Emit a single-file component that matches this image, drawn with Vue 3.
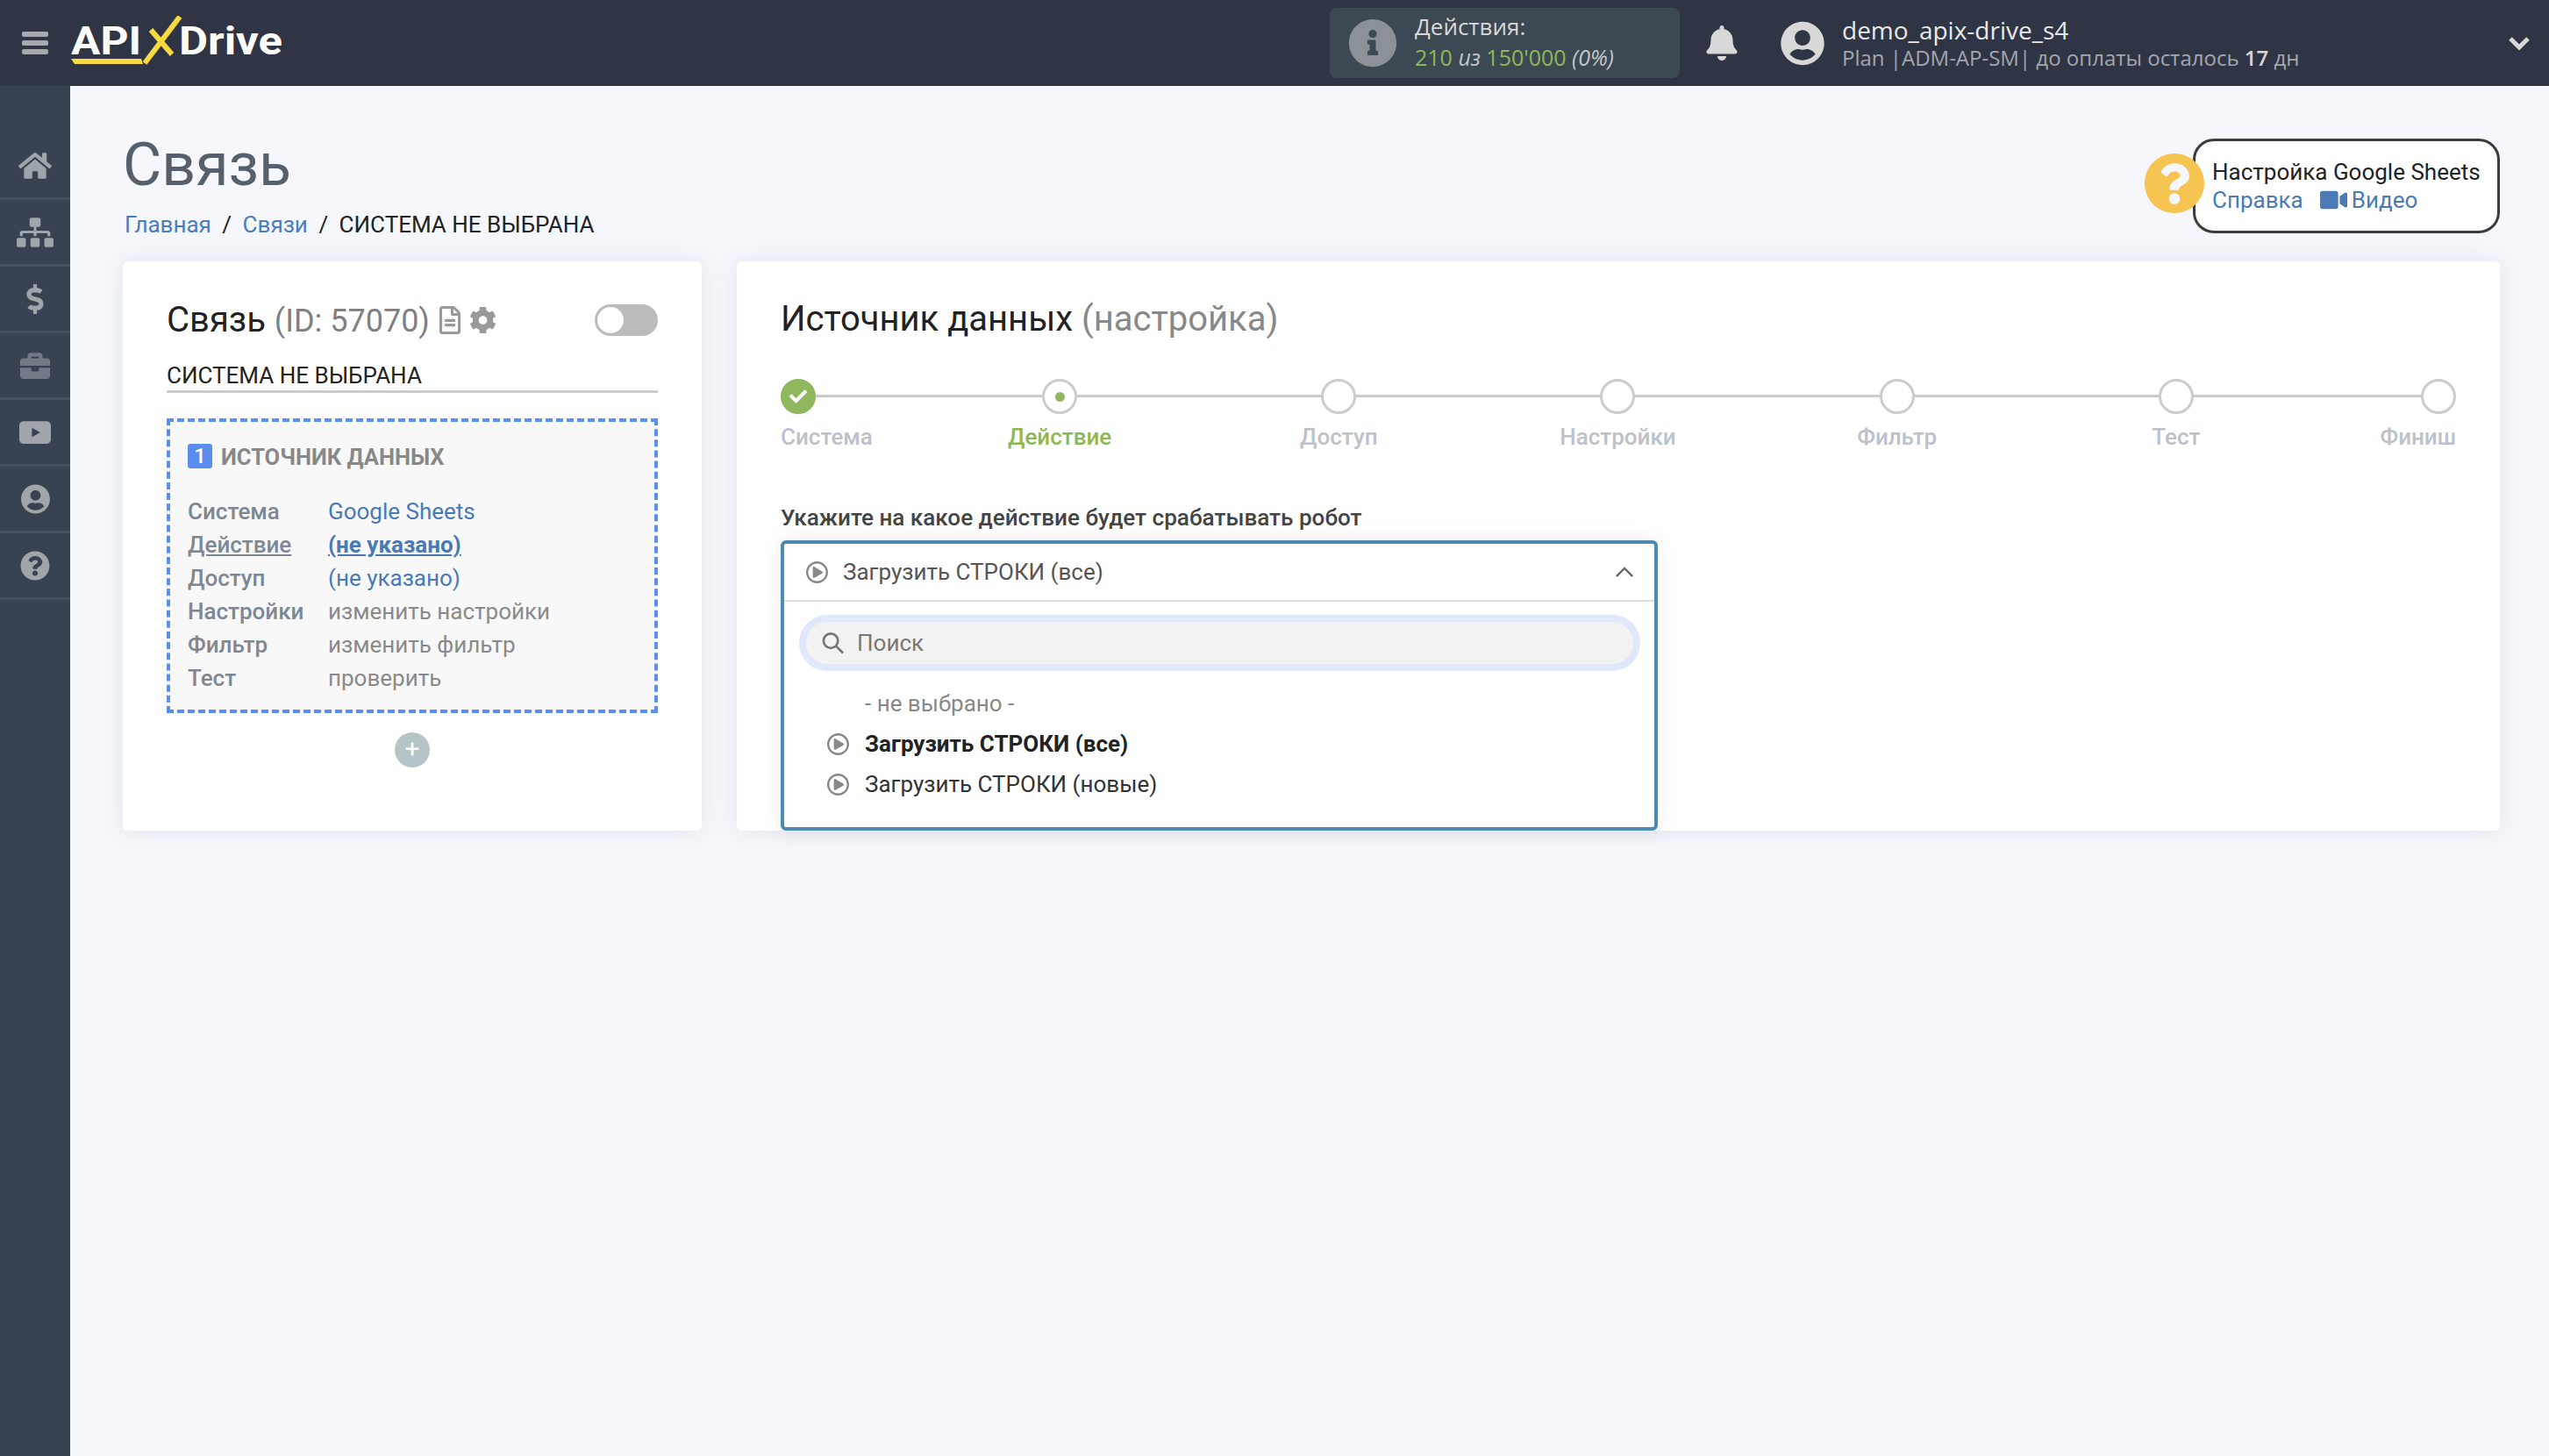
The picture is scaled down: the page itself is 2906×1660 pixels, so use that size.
<template>
  <div class="page">
    <!-- верхняя панель -->
    <header class="topbar">
      <div class="burger"><i></i><i></i><i></i></div>
      <svg class="logo" viewBox="0 0 250 60" width="250" height="60">
        <text x="1" y="44" class="logo-text" textLength="80" lengthAdjust="spacingAndGlyphs">API</text>
        <text x="124" y="44" class="logo-text" textLength="118" lengthAdjust="spacingAndGlyphs">Drive</text>
        <polygon points="1,49 81,49 83,55 5,55" fill="#fadb3f" />
        <path d="M85 54 L125 1 M92 16 L116 44" stroke="#fadb3f" stroke-width="6" fill="none" />
      </svg>
      <div class="topbar-right">
        <div class="actions-box">
          <svg class="actions-icon" viewBox="0 0 512 512"><path :d="icons.info" /></svg>
          <div>
            <div class="actions-title">Действия:</div>
            <div class="actions-count">210 <em>из</em> 150'000 <em>(0%)</em></div>
          </div>
        </div>
        <svg class="bell" viewBox="0 0 448 512"><path :d="icons.bell" /></svg>
        <svg class="user-icon" viewBox="0 0 496 512"><path :d="icons.user" /></svg>
        <div class="user-info">
          <div class="user-name">demo_apix-drive_s4</div>
          <div class="user-plan">Plan |ADM-AP-SM| до оплаты осталось <b>17</b> дн</div>
        </div>
        <svg class="user-arrow" viewBox="0 0 26 18"><path d="M3 4 L13 14 L23 4" /></svg>
      </div>
    </header>

    <div class="body-row">
      <!-- боковое меню -->
      <aside class="sidebar">
        <div v-for="item in menu" :key="item.name" class="side-item" :class="{ dim: item.dim }">
          <svg :viewBox="item.box" :class="item.name"><path :d="item.d" fill-rule="evenodd" /></svg>
        </div>
      </aside>

      <main class="content">
        <div class="page-head">
          <div>
            <h1>Связь</h1>
            <div class="crumbs">
              <a>Главная</a><span class="sep">/</span><a>Связи</a><span class="sep">/</span><span>СИСТЕМА НЕ ВЫБРАНА</span>
            </div>
          </div>
          <div class="help">
            <svg class="help-icon" viewBox="8 8 496 496"><path :d="icons.question" /></svg>
            <div class="help-box">
              <div class="help-title">Настройка Google Sheets</div>
              <div class="help-links">
                <a>Справка</a>
                <a class="video-link">
                  <svg viewBox="0 0 576 512"><path :d="icons.video" /></svg>Видео
                </a>
              </div>
            </div>
          </div>
        </div>

        <div class="cards">
          <!-- карточка связи -->
          <section class="card card-link">
            <div class="link-head">
              <span class="link-title">Связь <span class="link-id">(ID: 57070)</span></span>
              <svg class="doc-icon" viewBox="0 0 384 512"><path :d="icons.file" /></svg>
              <svg class="gear-icon" viewBox="0 0 512 512"><path :d="icons.cog" /></svg>
              <div class="toggle"><span></span></div>
            </div>
            <div class="link-name">СИСТЕМА НЕ ВЫБРАНА</div>
            <div class="source-box">
              <div class="source-head"><span class="badge">1</span>ИСТОЧНИК ДАННЫХ</div>
              <div v-for="row in rows" :key="row.label" class="source-row" :class="{ current: row.current }">
                <span class="row-label">{{ row.label }}</span>
                <span class="row-value" :class="{ link: row.link }">{{ row.value }}</span>
              </div>
            </div>
            <div class="add-btn">+</div>
          </section>

          <!-- настройка источника -->
          <section class="card card-setup">
            <h2>Источник данных <span>(настройка)</span></h2>
            <div class="stepper">
              <div v-for="step in steps" :key="step.name" class="step" :class="step.state">
                <div class="step-dot">
                  <svg v-if="step.state === 'done'" viewBox="0 0 512 512"><path :d="icons.check" /></svg>
                  <i v-if="step.state === 'active'"></i>
                </div>
                <div class="step-name">{{ step.name }}</div>
              </div>
            </div>
            <div class="field-label">Укажите на какое действие будет срабатывать робот</div>
            <div class="dropdown">
              <div class="dd-head">
                <svg class="play" viewBox="8 8 496 496"><path :d="icons.play" /></svg>
                <span>Загрузить СТРОКИ (все)</span>
                <svg class="dd-arrow" viewBox="0 0 24 14"><path d="M2 12 L12 2 L22 12" /></svg>
              </div>
              <div class="dd-search">
                <svg viewBox="0 0 28 28"><circle cx="11.5" cy="11.5" r="8.5" /><path d="M18 18 L26 26" /></svg>
                <span>Поиск</span>
              </div>
              <div class="dd-list">
                <div class="dd-empty">- не выбрано -</div>
                <div v-for="opt in options" :key="opt.text" class="dd-option" :class="{ selected: opt.selected }">
                  <svg class="play" viewBox="8 8 496 496"><path :d="icons.play" /></svg>
                  <span>{{ opt.text }}</span>
                </div>
              </div>
            </div>
          </section>
        </div>
      </main>
    </div>
  </div>
</template>

<script setup>
// иконки
const icons = {
  info: 'M256 8C119.043 8 8 119.083 8 256c0 136.997 111.043 248 248 248s248-111.003 248-248C504 119.083 392.957 8 256 8zm0 110c23.196 0 42 18.804 42 42s-18.804 42-42 42-42-18.804-42-42 18.804-42 42-42zm56 254c0 6.627-5.373 12-12 12h-88c-6.627 0-12-5.373-12-12v-24c0-6.627 5.373-12 12-12h12v-64h-12c-6.627 0-12-5.373-12-12v-24c0-6.627 5.373-12 12-12h64c6.627 0 12 5.373 12 12v100h12c6.627 0 12 5.373 12 12v24z',
  bell: 'M224 512c35.32 0 63.97-28.65 63.97-64H160.03c0 35.35 28.65 64 63.97 64zm215.39-149.71c-19.32-20.76-55.47-51.99-55.47-154.29 0-77.7-54.48-139.9-127.94-155.16V32c0-17.67-14.32-32-31.98-32s-31.98 14.33-31.98 32v20.84C118.56 68.1 64.08 130.3 64.08 208c0 102.3-36.15 133.53-55.47 154.29-6 6.45-8.66 14.16-8.61 21.71.11 16.4 12.98 32 32.1 32h383.8c19.12 0 32-15.6 32.1-32 .05-7.55-2.61-15.27-8.61-21.71z',
  user: 'M248 8C111 8 0 119 0 256s111 248 248 248 248-111 248-248S385 8 248 8zm0 96c48.6 0 88 39.4 88 88s-39.4 88-88 88-88-39.4-88-88 39.4-88 88-88zm0 344c-58.7 0-111.3-26.6-146.5-68.2 18.8-35.4 55.6-59.8 98.5-59.8 2.4 0 4.8.4 7.1 1.1 13 4.2 26.6 6.9 40.9 6.9 14.3 0 28-2.7 40.9-6.9 2.3-.7 4.7-1.1 7.1-1.1 42.9 0 79.7 24.4 98.5 59.8C359.3 421.4 306.7 448 248 448z',
  question: 'M504 256c0 136.997-111.043 248-248 248S8 392.997 8 256C8 119.083 119.043 8 256 8s248 111.083 248 248zM262.655 90c-54.497 0-89.255 22.957-116.549 63.758-3.536 5.286-2.353 12.415 2.715 16.258l34.699 26.31c5.205 3.947 12.621 3.008 16.665-2.122 17.864-22.658 30.113-35.797 57.303-35.797 20.429 0 45.698 13.148 45.698 32.958 0 14.976-12.363 22.667-32.534 33.976C247.128 238.528 216 254.941 216 296v4c0 6.627 5.373 12 12 12h56c6.627 0 12-5.373 12-12v-1.333c0-28.462 83.186-29.647 83.186-106.667 0-58.002-60.165-102-116.531-102zM256 338c-25.365 0-46 20.635-46 46 0 25.364 20.635 46 46 46s46-20.636 46-46c0-25.365-20.635-46-46-46z',
  video: 'M336.2 64H47.8C21.4 64 0 85.4 0 111.8v288.4C0 426.6 21.4 448 47.8 448h288.4c26.4 0 47.8-21.4 47.8-47.8V111.8c0-26.4-21.4-47.8-47.8-47.8zm189.4 37.7L416 177.3v157.4l109.6 75.5c21.2 14.6 50.4-.3 50.4-25.8V127.5c0-25.4-29.1-40.4-50.4-25.8z',
  file: 'M288 248v28c0 6.6-5.4 12-12 12H108c-6.6 0-12-5.4-12-12v-28c0-6.6 5.4-12 12-12h168c6.6 0 12 5.4 12 12zm-12 72H108c-6.6 0-12 5.4-12 12v28c0 6.6 5.4 12 12 12h168c6.6 0 12-5.4 12-12v-28c0-6.6-5.4-12-12-12zm108-188.1V464c0 26.5-21.5 48-48 48H48c-26.5 0-48-21.5-48-48V48C0 21.5 21.5 0 48 0h204.1C264.8 0 277 5.1 286 14.1L369.9 98c9 8.9 14.1 21.2 14.1 33.9zm-128-80V128h76.1L256 51.9zM336 464V176H232c-13.3 0-24-10.7-24-24V48H48v416h288z',
  cog: 'M487.4 315.7l-42.6-24.6c4.3-23.2 4.3-47 0-70.2l42.6-24.6c4.9-2.8 7.1-8.6 5.5-14-11.1-35.6-30-67.8-54.7-94.6-3.8-4.1-10-5.1-14.8-2.3L380.8 110c-17.9-15.4-38.5-27.3-60.8-35.1V25.8c0-5.6-3.9-10.5-9.4-11.7-36.7-8.2-74.3-7.8-109.2 0-5.5 1.2-9.4 6.1-9.4 11.7V75c-22.2 7.9-42.8 19.8-60.8 35.1L88.7 85.5c-4.9-2.8-11-1.9-14.8 2.3-24.7 26.7-43.6 58.9-54.7 94.6-1.7 5.4.6 11.2 5.5 14L67.3 221c-4.3 23.2-4.3 47 0 70.2l-42.6 24.6c-4.9 2.8-7.1 8.6-5.5 14 11.1 35.6 30 67.8 54.7 94.6 3.8 4.1 10 5.1 14.8 2.3l42.6-24.6c17.9 15.4 38.5 27.3 60.8 35.1v49.2c0 5.6 3.9 10.5 9.4 11.7 36.7 8.2 74.3 7.8 109.2 0 5.5-1.2 9.4-6.1 9.4-11.7v-49.2c22.2-7.9 42.8-19.8 60.8-35.1l42.6 24.6c4.9 2.8 11 1.9 14.8-2.3 24.7-26.7 43.6-58.9 54.7-94.6 1.5-5.5-.7-11.3-5.6-14.1zM256 336c-44.1 0-80-35.9-80-80s35.9-80 80-80 80 35.9 80 80-35.9 80-80 80z',
  check: 'M173.898 439.404l-166.4-166.4c-9.997-9.997-9.997-26.206 0-36.204l36.203-36.204c9.997-10.998 26.207-9.998 36.204 0L192 312.69 432.095 72.596c9.997-9.997 26.207-9.997 36.204 0l36.203 36.204c9.997 9.997 9.997 26.206 0 36.204l-294.4 294.401c-9.998 9.997-26.207 9.997-36.204-.001z',
  play: 'M371.7 238l-176-107c-15.8-8.8-35.7 2.5-35.7 21v208c0 18.4 19.8 29.8 35.7 21l176-101c16.4-9.1 16.4-32.8 0-42zM504 256C504 119 393 8 256 8S8 119 8 256s111 248 248 248 248-111 248-248zm-448 0c0-110.5 89.5-200 200-200s200 89.5 200 200-89.5 200-200 200S56 366.5 56 256z'
}

const menu = [
  { name: 'i-home', box: '0 0 576 512', d: 'M280.37 148.26L96 300.11V464a16 16 0 0 0 16 16l112.06-.29a16 16 0 0 0 15.92-16V368a16 16 0 0 1 16-16h64a16 16 0 0 1 16 16v95.64a16 16 0 0 0 16 16.05L464 480a16 16 0 0 0 16-16V300L295.67 148.26a12.19 12.19 0 0 0-15.3 0zM571.6 251.47L488 182.56V44.05a12 12 0 0 0-12-12h-56a12 12 0 0 0-12 12v72.61L318.47 43a48 48 0 0 0-61 0L4.34 251.47a12 12 0 0 0-1.6 16.9l25.5 31A12 12 0 0 0 45.15 301l235.22-193.74a12.19 12.19 0 0 1 15.3 0L530.9 301a12 12 0 0 0 16.9-1.6l25.5-31a12 12 0 0 0-1.7-16.93z' },
  { name: 'i-map', box: '0 0 640 512', d: 'M128 352H32c-17.67 0-32 14.33-32 32v96c0 17.67 14.33 32 32 32h96c17.67 0 32-14.33 32-32v-96c0-17.67-14.33-32-32-32zm-24-80h192v48h48v-48h192v48h48v-57.59c0-21.17-17.23-38.41-38.41-38.41H344v-64h40c17.67 0 32-14.33 32-32V32c0-17.67-14.33-32-32-32H256c-17.67 0-32 14.33-32 32v96c0 17.67 14.33 32 32 32h40v64H94.41C73.23 224 56 241.23 56 262.41V320h48v-48zm264 80h-96c-17.67 0-32 14.33-32 32v96c0 17.67 14.33 32 32 32h96c17.67 0 32-14.33 32-32v-96c0-17.67-14.33-32-32-32zm240 0h-96c-17.67 0-32 14.33-32 32v96c0 17.67 14.33 32 32 32h96c17.67 0 32-14.33 32-32v-96c0-17.67-14.33-32-32-32z' },
  { name: 'i-dollar', box: '0 0 288 512', d: 'M209.2 233.4l-108-31.6C88.7 198.2 80 186.5 80 173.5c0-16.3 13.2-29.5 29.5-29.5h66.3c12.2 0 24.2 3.7 34.2 10.5 6.1 4.1 14.3 3.1 19.5-2l34.8-34c7.1-6.9 6.1-18.4-1.8-24.5C238 74.8 207.4 64.1 176 64V16c0-8.8-7.2-16-16-16h-32c-8.8 0-16 7.2-16 16v48h-2.5C45.8 64-5.4 118.7.5 183.6c4.2 46.1 39.4 83.6 83.8 96.6l102.5 30c12.5 3.7 21.2 15.3 21.2 28.3 0 16.3-13.2 29.5-29.5 29.5h-66.3C100 368 88 364.3 78 357.5c-6.1-4.1-14.3-3.1-19.5 2l-34.8 34c-7.1 6.9-6.1 18.4 1.8 24.5 24.5 19.2 55.1 29.9 86.5 30v48c0 8.8 7.2 16 16 16h32c8.8 0 16-7.2 16-16v-48.2c46.6-.9 90.3-28.6 105.7-72.7 21.5-61.6-14.6-124.8-72.5-141.7z' },
  { name: 'i-case', dim: true, box: '0 0 512 512', d: 'M320 336c0 8.84-7.16 16-16 16h-96c-8.84 0-16-7.16-16-16v-48H0v144c0 25.6 22.4 48 48 48h416c25.6 0 48-22.4 48-48V288H320v48zm144-208h-80V80c0-25.6-22.4-48-48-48H176c-25.6 0-48 22.4-48 48v48H48c-25.6 0-48 22.4-48 48v80h512v-80c0-25.6-22.4-48-48-48zm-144 0H192V96h128v32z' },
  { name: 'i-video', box: '0 0 576 412', d: 'M80 0H496C540 0 576 36 576 80V332C576 376 540 412 496 412H80C36 412 0 376 0 332V80C0 36 36 0 80 0zM230 120V292L380 206z' },
  { name: 'i-user', box: '0 0 496 512', d: icons.user },
  { name: 'i-help', box: '0 0 512 512', d: icons.question }
]

const rows = [
  { label: 'Система', value: 'Google Sheets', link: true },
  { label: 'Действие', value: '(не указано)', link: true, current: true },
  { label: 'Доступ', value: '(не указано)', link: true },
  { label: 'Настройки', value: 'изменить настройки' },
  { label: 'Фильтр', value: 'изменить фильтр' },
  { label: 'Тест', value: 'проверить' }
]

const steps = [
  { name: 'Система', state: 'done' },
  { name: 'Действие', state: 'active' },
  { name: 'Доступ', state: '' },
  { name: 'Настройки', state: '' },
  { name: 'Фильтр', state: '' },
  { name: 'Тест', state: '' },
  { name: 'Финиш', state: 'last' }
]

const options = [
  { text: 'Загрузить СТРОКИ (все)', selected: true },
  { text: 'Загрузить СТРОКИ (новые)' }
]
</script>

<style scoped>
.page {
  min-height: 1660px;
  background: #f5f7fc;
  font-family: Roboto, "Liberation Sans", sans-serif;
  color: #222;
}

.topbar {
  height: 98px;
  background: #2f3544;
  display: flex;
  align-items: center;
}
.burger {
  width: 30px;
  margin-left: 25px;
  display: flex;
  flex-direction: column;
  gap: 4px;
}
.burger i {
  height: 6px;
  border-radius: 2px;
  background: #a5a8ae;
}
.logo {
  margin-left: 25px;
  margin-top: -2px;
}
.logo-text {
  font-family: Roboto, sans-serif;
  font-weight: 700;
  font-size: 45px;
  fill: #fff;
}
.topbar-right {
  margin-left: auto;
  display: flex;
  align-items: center;
}
.actions-box {
  width: 399px;
  height: 80px;
  box-sizing: border-box;
  padding-left: 21px;
  background: #3c4852;
  border-radius: 8px;
  display: flex;
  align-items: center;
  gap: 20px;
  font-family: "Open Sans", sans-serif;
}
.actions-icon {
  width: 56px;
  height: 56px;
  fill: #8b9196;
}
.actions-title {
  font-size: 26px;
  line-height: 34px;
  margin-top: -3px;
  color: #d8d8d8;
}
.actions-count {
  font-size: 25px;
  line-height: 36px;
  color: #8eb85a;
}
.actions-count em {
  color: #c3c6ca;
}
.bell {
  width: 36px;
  height: 40px;
  margin-left: 30px;
  fill: #d8d8d8;
}
.user-icon {
  width: 50px;
  height: 51px;
  margin-left: 49px;
  fill: #d8d8d8;
}
.user-info {
  width: 759px;
  margin-left: 20px;
  font-family: "Open Sans", sans-serif;
}
.user-name {
  font-size: 28px;
  line-height: 34px;
  color: #e8e8e8;
}
.user-plan {
  font-size: 24px;
  line-height: 30px;
  color: #a3a7ae;
}
.user-plan b {
  color: #d8d8d8;
  font-weight: 600;
}
.user-arrow {
  width: 26px;
  height: 18px;
  margin-right: 21px;
  fill: none;
  stroke: #d8d8d8;
  stroke-width: 5;
}

.body-row {
  display: flex;
}
.sidebar {
  width: 80px;
  flex-shrink: 0;
  min-height: 1562px;
  padding-top: 54px;
  box-sizing: border-box;
  background: #394250;
}
.side-item {
  height: 76px;
  box-sizing: border-box;
  border-bottom: 3px solid #475060;
  display: flex;
  align-items: center;
  justify-content: center;
  fill: #a0a4ab;
}
.side-item.dim {
  fill: #737985;
}
.i-home { width: 38px; height: 34px; }
.i-map { width: 42px; height: 34px; }
.i-dollar { width: 20px; height: 34px; }
.i-case { width: 34px; height: 34px; }
.i-video { width: 36px; height: 26px; }
.i-user { width: 33px; height: 34px; }
.i-help { width: 34px; height: 34px; }

.content {
  flex: 1;
  padding: 50px 56px 0 60px;
}
.page-head {
  display: flex;
  justify-content: space-between;
  align-items: flex-start;
}
h1 {
  margin: 0;
  font-size: 68px;
  line-height: 80px;
  font-weight: 400;
  color: #56606c;
}
.crumbs {
  margin-top: 10px;
  margin-left: 2px;
  font-size: 26px;
  line-height: 36px;
  color: #222;
}
.crumbs a {
  color: #4a7dbd;
}
.sep {
  margin: 0 12.5px;
}
.help {
  margin-top: 10px;
  display: flex;
  align-items: center;
}
.help-icon {
  position: relative;
  z-index: 1;
  width: 68px;
  height: 68px;
  margin-top: -6px;
  margin-right: -13px;
  fill: #f5c451;
}
.help-box {
  width: 350px;
  height: 108px;
  box-sizing: border-box;
  padding-left: 19px;
  border: 3px solid #3c3c3c;
  border-radius: 24px;
  background: #fff;
  display: flex;
  flex-direction: column;
  justify-content: center;
  font-size: 26px;
  line-height: 32px;
}
.help-links {
  display: flex;
  gap: 19px;
  color: #4a7ab8;
}
.video-link {
  display: flex;
  align-items: center;
  gap: 5px;
}
.video-link svg {
  width: 31px;
  height: 28px;
  fill: #4a7ab8;
}

.cards {
  margin-top: 24px;
  display: flex;
  gap: 40px;
}
.card {
  height: 649px;
  box-sizing: border-box;
  background: #fff;
  border-radius: 6px;
  box-shadow: 0 0 30px rgba(60, 70, 100, 0.1);
}
.card-link {
  width: 660px;
  flex-shrink: 0;
  padding: 47px 50px 0;
}
.link-head {
  display: flex;
  align-items: center;
  height: 40px;
}
.link-title {
  font-size: 40px;
  line-height: 40px;
  color: #222;
}
.link-id {
  font-size: 36px;
  color: #808080;
}
.doc-icon {
  width: 24px;
  height: 32px;
  margin-left: 11px;
  fill: #999;
}
.gear-icon {
  width: 31px;
  height: 32px;
  margin-left: 10px;
  fill: #999;
}
.toggle {
  width: 72px;
  height: 36px;
  margin-left: auto;
  box-sizing: border-box;
  padding: 3px;
  border-radius: 18px;
  background: #bbb;
}
.toggle span {
  display: block;
  width: 30px;
  height: 30px;
  border-radius: 50%;
  background: #fff;
}
.link-name {
  margin-top: 27px;
  font-size: 26px;
  line-height: 33px;
  border-bottom: 3px solid #ccc;
  color: #222;
}
.source-box {
  margin-top: 29px;
  height: 336px;
  box-sizing: border-box;
  padding: 25px 20px 0;
  border: 4px dashed #5a8ef0;
  background: #f8f8f8;
}
.source-head {
  display: flex;
  align-items: center;
  gap: 10px;
  height: 30px;
  margin-bottom: 28px;
  font-size: 25.5px;
  font-weight: 700;
  color: #888;
}
.badge {
  width: 28px;
  height: 28px;
  margin-top: -3px;
  border-radius: 3px;
  background: #5b8def;
  color: #fff;
  font-size: 24px;
  font-weight: 500;
  line-height: 28px;
  text-align: center;
}
.source-row {
  display: grid;
  grid-template-columns: 160px 1fr;
  font-size: 26px;
  line-height: 38px;
}
.row-label {
  font-weight: 500;
  color: #7e8794;
}
.row-value {
  color: #8a8a8a;
}
.row-value.link {
  color: #4a7ab5;
}
.source-row.current .row-label {
  text-decoration: underline;
}
.source-row.current .row-value {
  font-weight: 700;
  text-decoration: underline;
}
.add-btn {
  width: 40px;
  height: 40px;
  margin: 22px auto 0;
  border-radius: 50%;
  background: #b5c4c4;
  color: #fff;
  font-size: 30px;
  line-height: 38px;
  text-align: center;
}

.card-setup {
  flex: 1;
  padding: 42px 50px 0;
}
h2 {
  margin: 0;
  font-size: 40px;
  line-height: 48px;
  font-weight: 400;
  color: #222;
}
h2 span {
  color: #888;
}
.stepper {
  position: relative;
  margin-top: 44px;
  display: grid;
  grid-template-columns: 159px repeat(5, 1fr) 160px;
  text-align: center;
}
.stepper::before {
  content: "";
  position: absolute;
  left: 20px;
  right: 20px;
  top: 18px;
  height: 3px;
  background: #ccc;
}
.step {
  position: relative;
  display: flex;
  flex-direction: column;
  align-items: center;
}
.step.done {
  align-items: flex-start;
}
.step.last {
  align-items: flex-end;
}
.step-dot {
  width: 40px;
  height: 40px;
  box-sizing: border-box;
  border: 3px solid #ccc;
  border-radius: 50%;
  background: #fff;
  display: flex;
  align-items: center;
  justify-content: center;
}
.step.done .step-dot {
  background: #8fb85e;
  border-color: #8fb85e;
}
.step-dot svg {
  width: 20px;
  height: 20px;
  fill: #fff;
}
.step-dot i {
  width: 11px;
  height: 11px;
  border-radius: 50%;
  background: #8fb85e;
}
.step-name {
  margin-top: 10px;
  font-size: 26px;
  line-height: 32px;
  font-weight: 500;
  color: #bcc1ca;
}
.step.active .step-name {
  color: #8cb858;
}
.field-label {
  margin-top: 60px;
  font-size: 26.1px;
  line-height: 32px;
  font-weight: 500;
  color: #444;
}
.dropdown {
  margin-top: 10px;
  width: 1000px;
  height: 331px;
  box-sizing: border-box;
  border: 4px solid #4d8ab0;
  border-radius: 6px;
  background: #fff;
  box-shadow: 0 0 24px rgba(0, 0, 0, 0.08);
}
.dd-head {
  height: 66px;
  box-sizing: border-box;
  padding: 0 23px 0 25px;
  border-bottom: 2px solid #ddd;
  display: flex;
  align-items: center;
  gap: 17px;
  font-size: 26px;
  color: #555;
}
.play {
  width: 25px;
  height: 25px;
  flex-shrink: 0;
  fill: #888;
}
.dd-arrow {
  width: 22px;
  height: 13px;
  margin-left: auto;
  fill: none;
  stroke: #666;
  stroke-width: 2.5;
}
.dd-search {
  margin: 15px 16px 0 17px;
  height: 64px;
  box-sizing: border-box;
  padding-left: 17px;
  border: 8px solid #e0e8fb;
  border-radius: 32px;
  background: #f2f2f2;
  display: flex;
  align-items: center;
  gap: 14px;
  font-size: 26px;
  color: #777;
}
.dd-search svg {
  width: 27px;
  height: 28px;
  fill: none;
  stroke: #777;
  stroke-width: 2.8;
}
.dd-list {
  margin-top: 14px;
  padding-left: 49px;
  font-size: 26px;
  line-height: 46px;
}
.dd-empty {
  padding-left: 43px;
  color: #888;
}
.dd-option {
  display: flex;
  align-items: center;
  gap: 18px;
  color: #333;
}
.dd-option.selected {
  font-weight: 700;
  color: #222;
}
</style>

<style>
body {
  background: #f5f7fc;
}
</style>
